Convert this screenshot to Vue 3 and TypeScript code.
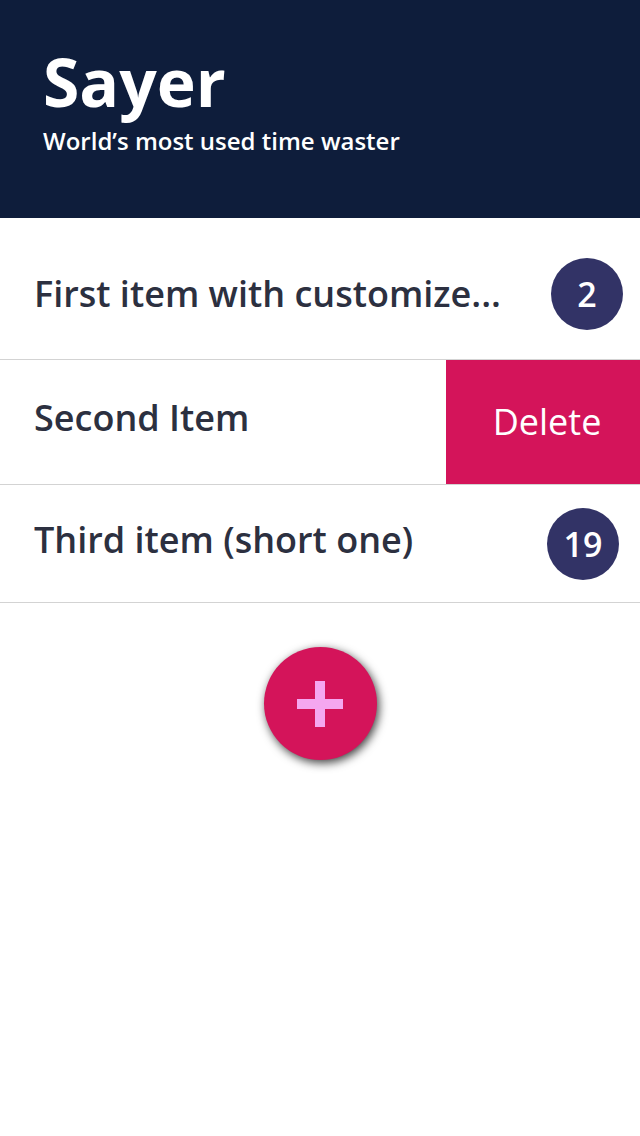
<script setup lang="ts">
import { ref } from 'vue'

interface Item {
  id: number
  label: string
  count: number
  size: string
  swiped?: boolean
}

const items = ref<Item[]>([
  { id: 1, label: 'First item with customize...', count: 2, size: 'tall' },
  { id: 2, label: 'Second Item', count: 0, size: 'medium', swiped: true },
  { id: 3, label: 'Third item (short one)', count: 19, size: 'short' },
])

function increment(item: Item) {
  item.count++
}

function remove(id: number) {
  items.value = items.value.filter((item) => item.id !== id)
}

function add() {
  items.value.push({ id: Date.now(), label: 'New item', count: 0, size: 'short' })
}
</script>

<template>
  <div class="app">
    <header class="header">
      <h1>Sayer</h1>
      <p>World’s most used time waster</p>
    </header>
    <main>
      <ul class="list">
        <li v-for="item in items" :key="item.id" class="row" :class="item.size">
          <span class="label">{{ item.label }}</span>
          <button v-if="item.swiped" class="delete" type="button" @click="remove(item.id)">Delete</button>
          <button v-else class="badge" type="button" @click="increment(item)">{{ item.count }}</button>
        </li>
      </ul>
      <button class="add" type="button" aria-label="Add item" @click="add">
        <svg viewBox="0 0 46 46" width="46" height="46" aria-hidden="true">
          <path d="M18 0h10v18h18v10H28v18H18V28H0V18h18z" fill="#f5a7f0" />
        </svg>
      </button>
    </main>
  </div>
</template>

<style>
body {
  margin: 0;
  background: #fff;
}
</style>

<style scoped>
.app {
  min-height: 100vh;
  font-family: "Open Sans", "Noto Sans", sans-serif;
  color: #2c3040;
}
.header {
  box-sizing: border-box;
  min-height: 218px;
  padding: 39px 43px;
  background: #0e1d3b;
  color: #fff;
}
h1 {
  margin: 0;
  font-size: 66px;
  line-height: 84px;
  font-weight: 700;
}
.header p {
  margin: 0;
  font-size: 24px;
  line-height: 36px;
  font-weight: 600;
}
.list {
  margin: 0;
  padding: 0;
  list-style: none;
}
.row {
  display: flex;
  align-items: center;
  justify-content: space-between;
  box-sizing: border-box;
  padding-left: 34px;
  border-bottom: 1px solid #d3d3d3;
}
.tall {
  min-height: 142px;
  padding-top: 10px;
  padding-right: 17px;
}
.medium {
  min-height: 125px;
}
.short {
  min-height: 118px;
  padding-right: 21px;
}
.label {
  min-width: 0;
  overflow: hidden;
  font-size: 36px;
  line-height: 48px;
  font-weight: 600;
  white-space: nowrap;
  text-overflow: ellipsis;
}
.medium .label,
.short .label {
  padding-bottom: 8px;
}
button {
  border: 0;
  padding: 0;
  font-family: inherit;
  cursor: pointer;
}
.badge {
  flex: none;
  width: 72px;
  height: 72px;
  border-radius: 50%;
  background: #323366;
  color: #fff;
  font-size: 34px;
  line-height: 48px;
  font-weight: 600;
}
.delete {
  flex: none;
  align-self: stretch;
  width: 194px;
  padding-left: 8px;
  background: #d4145a;
  color: #fff;
  font-size: 36px;
  line-height: 48px;
}
.add {
  display: flex;
  align-items: center;
  justify-content: center;
  width: 113px;
  height: 113px;
  margin: 44px auto 0;
  border-radius: 50%;
  background: #d4145a;
  box-shadow: 2px 3px 10px rgba(0, 0, 0, 0.75);
}
</style>
